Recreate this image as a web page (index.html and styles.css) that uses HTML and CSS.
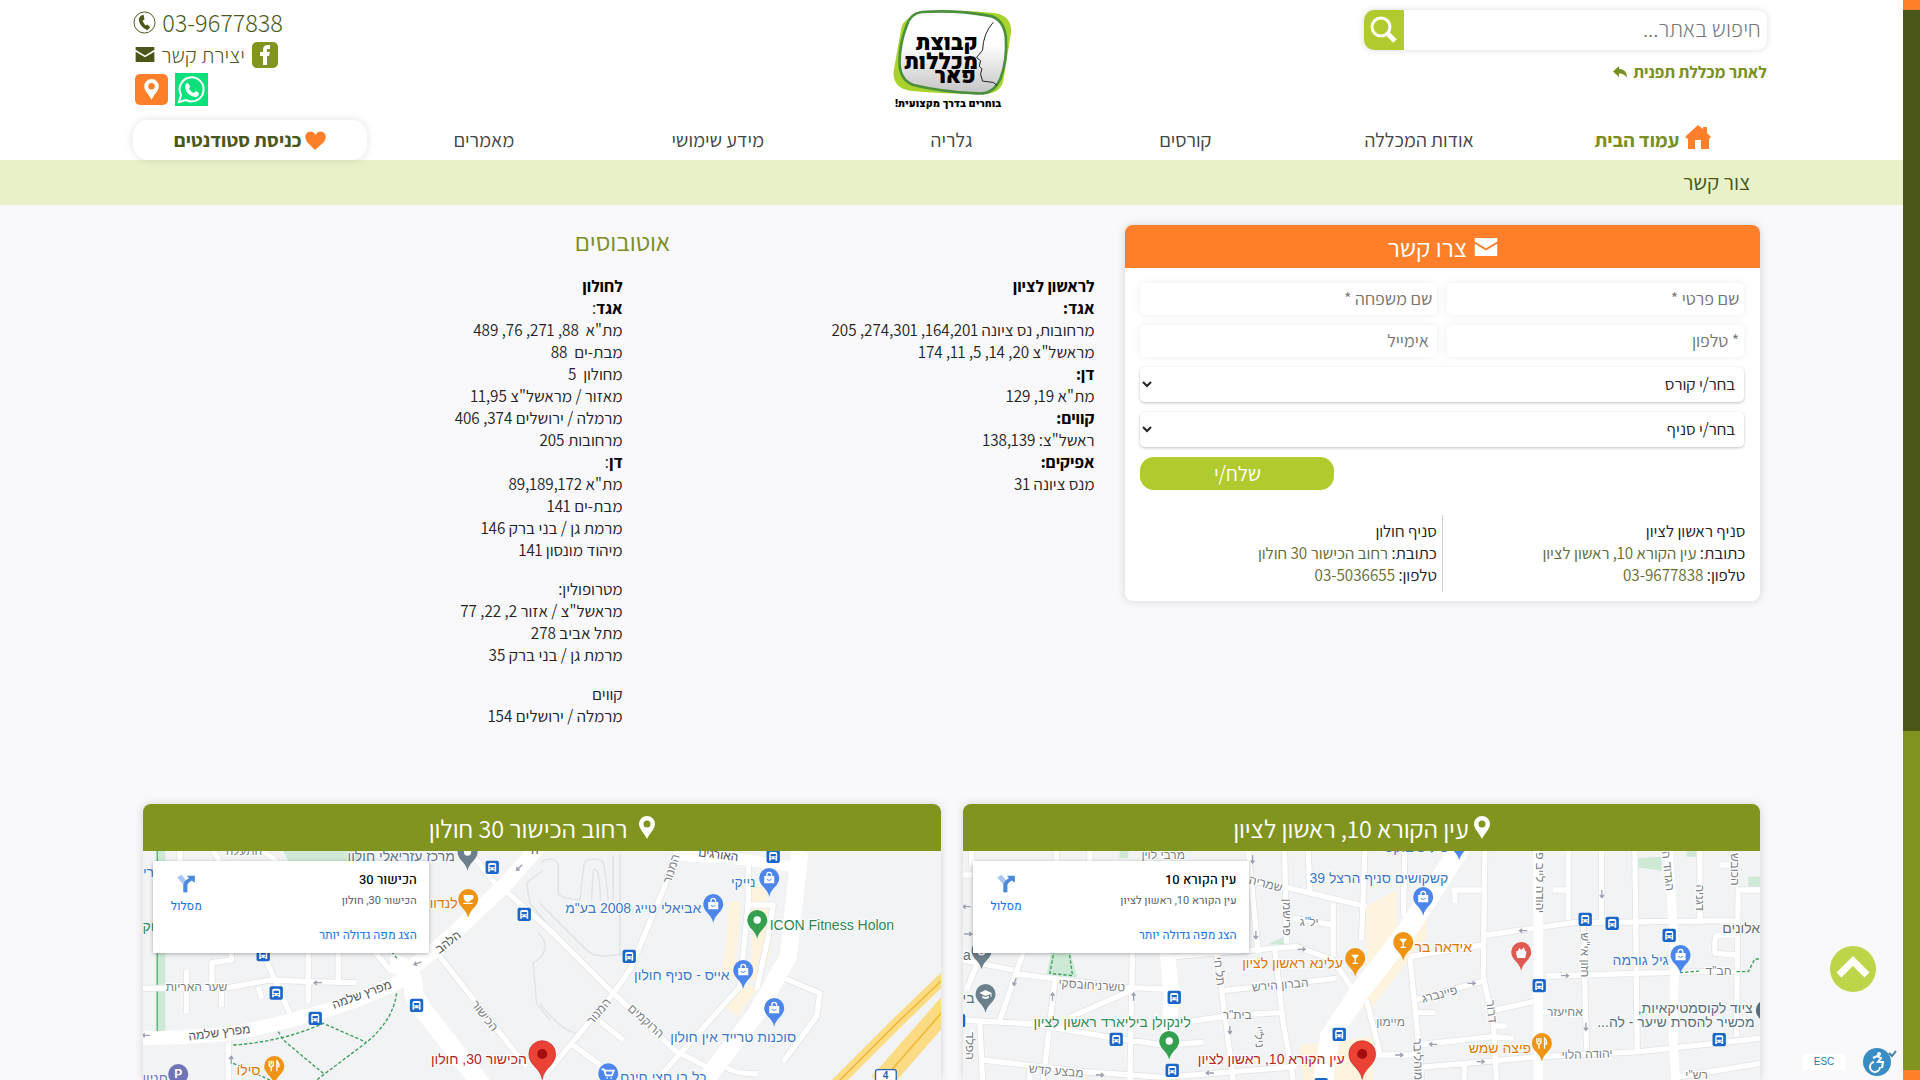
FILE: index.html
```html
<!DOCTYPE html>
<html lang="he" dir="rtl">

<head>
    <meta charset="UTF-8">
    <meta name="viewport" content="width=device-width, initial-scale=1.0">
    <title>צור קשר - קבוצת מכללות פאר</title>
    <link rel="stylesheet" href="styles.css">
</head>

<body>
    <!-- shared icons -->
    <svg class="defs" aria-hidden="true">
        <symbol id="mail" viewBox="0 0 20 16">
            <path d="M0 0H20V3L10 9 0 3Z" />
            <path d="M0 5L10 11 20 5V16H0Z" />
        </symbol>
        <symbol id="place" viewBox="0 0 16 23">
            <path fill-rule="evenodd" d="M8 0A8 8 0 0 1 16 8C16 13 10 18 8 23 6 18 0 13 0 8A8 8 0 0 1 8 0ZM8 4.5A3.5 3.5 0 1 0 8 11.5 3.5 3.5 0 0 0 8 4.500Z" />
        </symbol>
        <g id="bag">
            <path d="M0 56C-5 30-30 24-30 0A30 30 0 1 1 30 0C30 24 5 30 0 56Z" fill="#4c86ec" />
            <path d="M-15-6H15V16H-15Z" fill="#fff" />
            <path d="M-7-5V-10A7 7 0 0 1 7-10V-5" fill="none" stroke="#fff" stroke-width="4" />
            <path d="M-7 4Q0 11 7 4" fill="none" stroke="#4c86ec" stroke-width="3" />
        </g>
        <g id="tip">
            <path d="M0 56C-5 30-30 24-30 0A30 30 0 1 1 30 0C30 24 5 30 0 56Z" />
        </g>
        <g id="fork">
            <path d="M-9-16V-4M-3-16V-4M-15-16V-4Q-15 2-9 2T-3-4M-9 0V16M8 16V-16Q15-10 14 2H8" fill="none" stroke="#fff" stroke-width="4" />
        </g>
        <g id="marker">
            <path d="M0 76C-5 42-40 34-40 0A40 40 0 1 1 40 0C40 34 5 42 0 76Z" fill="#ea4335" stroke="#c5221f" stroke-width="2" />
            <circle r="15" fill="#a50e0e" />
        </g>
        <g id="bus">
            <rect x="-20" y="-20" width="40" height="40" rx="6" fill="#1a66c9" />
            <path d="M-12 13V-8Q-12-13-7-13H7Q12-13 12-8V13H7V9H-7V13Z" fill="#fff" />
            <path d="M-8-7H8V0H-8ZM-8 3H-4V6H-8ZM4 3H8V6H4Z" fill="#1a66c9" />
        </g>
        <g id="cap">
            <path d="M0 56C-5 30-30 24-30 0A30 30 0 1 1 30 0C30 24 5 30 0 56Z" fill="#6b7f8c" />
            <path d="M-18-3L0-12 18-3V8H15V0L0 6ZM-10 5L0 10 10 5V11Q0 18-10 11Z" fill="#fff" />
        </g>
        <g id="arrow">
            <path d="M-12 0H10M3-6L11 0 3 6" fill="none" stroke="#9a9fae" stroke-width="4" />
        </g>
        <symbol id="route" viewBox="0 0 54 58">
            <path d="M0 10L14 2 31 26V56H19V33Z" fill="#a9c7f5" />
            <path d="M19 56V34Q19 22 36 13L30 5H54V27L45 20Q31 27 31 36V56Z" fill="#4a89dc" />
        </symbol>
    </svg>

    <header class="header">
        <div class="container top">
            <div class="search">
                <form class="search-form">
                    <input type="text" id="search" placeholder="חיפוש באתר..." aria-label="חיפוש באתר">
                    <button type="button" aria-label="חפש">
                        <svg viewBox="0 0 28 28"><circle cx="11" cy="11" r="9" fill="none" stroke="#fff" stroke-width="3" /><path d="M17 17L25 25" stroke="#fff" stroke-width="5" /></svg>
                    </button>
                </form>
                <a href="#" class="other-site">לאתר מכללת תפנית
                    <svg viewBox="0 0 14 12"><path d="M6 0V3Q14 3 14 12 11 7 6 7.500V11L0 5.500Z" /></svg>
                </a>
            </div>

            <a href="#" class="logo" aria-label="קבוצת מכללות פאר">
                <svg viewBox="96 20 360 310">
                    <defs>
                        <linearGradient id="shade" x1="0" y1="0" x2="0" y2="1">
                            <stop offset="0.4" stop-color="#fff" />
                            <stop offset="1" stop-color="#c4c4c4" />
                        </linearGradient>
                    </defs>
                    <path d="M175 42Q270 25 405 38 455 46 454 95L430 245Q418 284 365 282 250 282 150 272 98 264 100 215L124 80Q134 52 175 42Z" fill="#a9d32a" />
                    <path d="M185 35Q290 28 385 46 430 52 438 110 443 180 422 235 400 285 350 280 240 275 160 255 120 240 118 190 118 130 140 75 150 40 185 35Z" fill="url(#shade)" stroke="#4a8f3c" stroke-width="8" />
                    <path d="M400 66Q370 100 368 150L350 172 362 182 358 198 366 206 362 222 368 243 400 247 412 256" fill="none" stroke="#222" stroke-width="3" />
                    <text x="354" y="149" class="logo-name">קבוצת</text>
                    <text x="354" y="207" class="logo-name">מכללות</text>
                    <text x="348" y="249" class="logo-name">פאר</text>
                    <text x="424" y="321" class="logo-slogan">בוחרים בדרך מקצועית!</text>
                </svg>
            </a>

            <div class="contacts">
                <a href="#" class="phone">03-9677838
                    <svg viewBox="0 0 24 24"><circle cx="12" cy="12" r="11" fill="none" stroke="#4a5718" stroke-width="1" /><path d="M8 5L11 4 12 9 10 10Q11 13 13 15L15 14 18 17 15 20Q6 16 6 8Z" /></svg>
                </a>
                <div class="contact-row">
                    <a href="#" aria-label="פייסבוק">
                        <svg class="facebook" viewBox="0 0 26 26"><rect width="26" height="26" rx="5" fill="#81941f" /><path d="M11 23V14H8V10H11V8Q11 3 16 3H18V7H16Q15 7 15 8V10H18L17 14H15V23Z" fill="#fff" /></svg>
                    </a>
                    <a href="#">יצירת קשר <svg class="mail"><use href="#mail" /></svg></a>
                </div>
                <div class="contact-row small">
                    <a href="#" aria-label="וואטסאפ">
                        <svg class="whatsapp" viewBox="0 0 33 33"><rect width="33" height="33" fill="#0be07a" /><path d="M4 29L6 22A12 12 0 1 1 11 27Z" fill="none" stroke="#fff" stroke-width="2" /><path d="M12 10L14 11 15 14 14 16Q16 19 19 20L21 18 24 20Q24 24 20 24 11 22 10 14 10 11 12 10Z" fill="#fff" /></svg>
                    </a>
                    <a href="#" class="waze" aria-label="מיקום"><svg><use href="#place" /></svg></a>
                </div>
            </div>
        </div>

        <nav class="container menu">
            <a href="#" class="home">
                <svg viewBox="0 0 26 24"><path d="M13 0L18 4V2H22V8L26 12 24 14V24H16V15H10V24H3V14L0 12Z" /></svg>
                עמוד הבית</a>
            <a href="#">אודות המכללה</a>
            <a href="#">קורסים</a>
            <a href="#">גלריה</a>
            <a href="#">מידע שימושי</a>
            <a href="#">מאמרים</a>
            <a href="#" class="students">
                <svg viewBox="0 0 21 19"><path d="M10 19L2 11Q-2 4 3 1 8-1 10.500 4 13-1 18 1 23 4 19 11Z" /></svg>
                כניסת סטודנטים</a>
        </nav>
    </header>

    <div class="page-title">
        <h1 class="content">צור קשר</h1>
    </div>

    <main class="content">
        <div class="main-row">
            <!-- contact form -->
            <section class="card">
                <h2 class="card-head"><svg><use href="#mail" /></svg>צרו קשר</h2>
                <form class="form">
                    <input type="text" placeholder="שם פרטי *" aria-label="שם פרטי">
                    <input type="text" placeholder="שם משפחה *" aria-label="שם משפחה">
                    <input type="tel" dir="rtl" placeholder="* טלפון" aria-label="טלפון">
                    <input type="email" dir="rtl" placeholder="&nbsp;אימייל" aria-label="אימייל">
                    <select aria-label="קורס">
                        <option>בחר/י קורס</option>
                    </select>
                    <select aria-label="סניף">
                        <option>בחר/י סניף</option>
                    </select>
                    <button type="button">שלח/י</button>
                </form>
                <div class="branches">
                    <p>סניף ראשון לציון<br>כתובת: <a href="#">עין הקורא 10, ראשון לציון</a><br>טלפון: <a href="#">03-9677838</a></p>
                    <p>סניף חולון<br>כתובת: <a href="#">רחוב הכישור 30 חולון</a><br>טלפון: <a href="#">03-5036655</a></p>
                </div>
            </section>

            <!-- bus lines -->
            <section class="buses">
                <h2>אוטובוסים</h2>
                <div class="bus-cols">
                    <div>
                        <p>
                            <b>לראשון לציון</b><br>
                            <b>אגד:</b><br>
                            מרחובות, נס ציונה 164,201, 274,301, 205<br>
                            מראשל"צ 20, 14, 5, 11, 174<br>
                            <b>דן:</b><br>
                            מת"א 19, 129<br>
                            <b>קווים:</b><br>
                            ראשל"צ: 138,139<br>
                            <b>אפיקים:</b><br>
                            מנס ציונה 31
                        </p>
                    </div>
                    <div>
                        <p>
                            <b>לחולון</b><br>
                            <b>אגד</b>:<br>
                            מת"א&nbsp; 88, 271, 76, 489<br>
                            מבת-ים&nbsp; 88<br>
                            מחולון&nbsp; 5<br>
                            מאזור / מראשל"צ 11,95<br>
                            מרמלה / ירושלים 374, 406<br>
                            מרחובות 205<br>
                            <b>דן</b>:<br>
                            מת"א 89,189,172<br>
                            מבת-ים 141<br>
                            מרמת גן / בני ברק 146<br>
                            מיהוד מונסון 141
                        </p>
                        <p>
                            מטרופולין:<br>
                            מראשל"צ / אזור 2, 22, 77<br>
                            מתל אביב 278<br>
                            מרמת גן / בני ברק 35
                        </p>
                        <p>
                            קווים<br>
                            מרמלה / ירושלים 154
                        </p>
                    </div>
                </div>
            </section>
        </div>

        <!-- maps -->
        <div class="maps">
            <section class="map-card">
                <h2><svg><use href="#place" /></svg>עין הקורא 10, ראשון לציון</h2>
                <div class="map">
                    <svg class="map-view" viewBox="39 183 2394 687" preserveAspectRatio="xMidYMin slice">
                        <g class="park">
                            <path d="M305 480H360L382 562 290 555Z" />
                            <path d="M510 183H535V205H508ZM955 462L1005 440 1010 465Z" />
                            <path d="M2060 205L2135 200V242L2060 232ZM2395 260H2433V290H2395ZM2210 183H2240V200H2210Z" />
                        </g>
                        <g class="zone">
                            <path d="M1250 350L1340 300V430L1250 540ZM1430 360V440L1360 530 1260 660 1200 640 1390 420ZM1050 765L1270 740V870H1060Z" />
                        </g>
                        <g class="road-edge">
                            <path id="r1" d="M39 690L250 702 480 742 640 765 760 757M680 700L850 675 990 668M190 550L520 592 640 597M39 510L190 540M39 255H70M250 400L150 690M90 500L50 600M90 700L98 870M315 570L280 870M548 480L540 870M360 682L548 600M100 810L400 845 640 862 1040 830M670 500L970 475 1040 470 1150 510 1210 600M1004 183L1010 460M1075 183L1080 310M895 183L925 490M890 270L1000 290 1250 350M1150 340V500M800 480L850 870M820 602L1160 565M975 480L1000 700 1030 870M1245 183L1235 450M1030 385L1150 405M320 183V220M420 183V220M240 870V830M65 183V230" />
                            <path id="r2" d="M1365 183L1360 380M1605 183L1600 560 1630 700 1640 870M1855 183V390M1955 183V390M2055 183L2062 780M2250 183V390M2365 290L2360 740M1610 435L1870 398 2360 392M1790 558L2250 545H2360M1390 632L1610 570M1630 662L1750 635M1380 500L1600 465M1390 668H1455M1400 765L1630 740 1690 745M1280 795H1400M1410 832L1770 800 2070 785 2433 745M1505 300H1600M1515 300V340M1810 300H1855M1380 500L1410 800 1415 870M1250 630L1290 790M1543 820V870M2190 860L2433 820M2365 300H2433M1770 665H1830M1900 400L1910 780M2365 435H2310Q2295 435 2295 455V490L2360 495M1630 708H1670M2310 225H2350" />
                        </g>
                        <g class="road">
                            <use href="#r1" /><use href="#r2" />
                        </g>
                        <g class="road-main">
                            <path d="M652 480L665 620 655 740" stroke-width="46" />
                            <path d="M1540 160L1370 425 1230 605 1140 740 1120 870" stroke-width="60" />
                            <path d="M1765 183V870" stroke-width="28" />
                            <path d="M2155 183L2175 480 2170 760 2178 870" stroke-width="26" />
                        </g>
                        <path class="path-line" d="M313 480L300 550 368 557 357 480M2190 548L2250 543M2360 545H2395L2415 507H2433" />
                        <g class="streets">
                            <text x="425" y="598" transform="rotate(4 425 598)">טשרניחובסקי</text>
                            <text x="318" y="855" transform="rotate(5 318 855)">מבצע קדש</text>
                            <text x="940" y="292" transform="rotate(14 940 292)">שמריהו</text>
                            <text x="1078" y="407">יל"ג</text>
                            <text x="992" y="597" transform="rotate(-5 992 597)">הברון הירש</text>
                            <text x="862" y="688">בית"ר</text>
                            <text x="640" y="207">מרבי לוין</text>
                            <text x="796" y="545" transform="rotate(83 796 545)">תל חי</text>
                            <text x="1000" y="382" transform="rotate(90 1000 382)">פרישמן</text>
                            <text x="915" y="742" transform="rotate(85 915 742)">ניל"י</text>
                            <text x="48" y="768" transform="rotate(90 48 768)">הפלד</text>
                            <text x="1472" y="625" transform="rotate(-15 1472 625)">פיינברג</text>
                            <text x="1322" y="708">מיימון</text>
                            <text x="1845" y="677">אחיעזר</text>
                            <text x="1912" y="805" transform="rotate(-2 1912 805)">יהודה הלוי</text>
                            <text x="2306" y="556">חב"ד</text>
                            <text x="2240" y="866">רש"י</text>
                            <text x="1758" y="278" transform="rotate(90 1758 278)">יהודה לייב פ</text>
                            <text x="1892" y="495" transform="rotate(90 1892 495)">חזון אי"ש</text>
                            <text x="2142" y="244" transform="rotate(84 2142 244)">הגדוד ה</text>
                            <text x="2238" y="323" transform="rotate(90 2238 323)">דגניה</text>
                            <text x="2343" y="238" transform="rotate(90 2343 238)">הכובש</text>
                            <text x="1613" y="666" transform="rotate(84 1613 666)">דרור</text>
                            <text x="1392" y="808" transform="rotate(88 1392 808)">מוהליבר</text>
                        </g>
                        <use href="#arrow" transform="translate(50 350) rotate(180)" />
                        <use href="#arrow" x="55" y="432" />
                        <use href="#arrow" transform="translate(195 575) rotate(110)" />
                        <use href="#arrow" transform="translate(308 620) rotate(-90)" />
                        <use href="#arrow" transform="translate(551 620) rotate(-90)" />
                        <use href="#arrow" transform="translate(918 435) rotate(90)" />
                        <use href="#arrow" transform="translate(908 208) rotate(90)" />
                        <use href="#arrow" transform="translate(840 720) rotate(90)" />
                        <use href="#arrow" x="1055" y="478" />
                        <use href="#arrow" x="450" y="855" />
                        <use href="#arrow" transform="translate(780 849) rotate(180)" />
                        <use href="#arrow" transform="translate(1720 422) rotate(180)" />
                        <use href="#arrow" transform="translate(1956 312) rotate(90)" />
                        <use href="#arrow" transform="translate(1908 710) rotate(90)" />
                        <use href="#arrow" transform="translate(1450 763) rotate(180)" />
                        <use href="#arrow" x="1845" y="557" />
                        <use href="#arrow" x="1565" y="580" />
                        <use href="#arrow" x="1348" y="795" />
                        <use href="#arrow" x="1592" y="815" />
                        <g class="labels">
                            <text x="1287" y="279" fill="#3b77c9">קשקושים סניף הרצל 39</text>
                            <text x="1028" y="535" fill="#d97706">עלינא ראשון לציון</text>
                            <text x="487" y="710" fill="#2e8b57">לינקולן ביליארד ראשון לציון</text>
                            <text x="964" y="822" fill="#b3261e">עין הקורא 10, ראשון לציון</text>
                            <text x="1480" y="486" fill="#d97706">אידאה בר</text>
                            <text x="1650" y="789" fill="#d97706">פיצה שמש</text>
                            <text x="2072" y="524" fill="#3b77c9">גיל גורמה</text>
                            <text x="2374" y="429" fill="#5f6b75">אלונים</text>
                            <text x="2236" y="669" fill="#546e7a">ציוד לקוסמטיקאיות,</text>
                            <text x="2178" y="711" fill="#546e7a">מכשיר להסרת שיער - לה...</text>
                            <text x="1400" y="187" fill="#3b77c9">פיליפ בוקס</text>
                            <text x="51" y="510" fill="#546e7a">a</text>
                            <text x="56" y="640" fill="#546e7a">בי</text>
                        </g>
                        <use href="#cap" x="95" y="482" />
                        <use href="#cap" x="107" y="612" />
                        <use href="#bag" x="1420" y="321" />
                        <use href="#bag" x="1528" y="155" />
                        <use href="#bag" x="2192" y="495" />
                        <use href="#tip" x="658" y="753" fill="#34a04f" /><circle cx="658" cy="753" r="11" fill="#fff" />
                        <use href="#tip" x="1216" y="504" fill="#ef9412" /><path d="M1204 494H1228L1218 506V518H1224V522H1208V518H1214V506Z" fill="#fff" />
                        <use href="#tip" x="1360" y="456" fill="#ef9412" /><path d="M1348 446H1372L1362 458V470H1368V474H1352V470H1358V458Z" fill="#fff" />
                        <use href="#tip" x="1776" y="759" fill="#ef9412" /><use href="#fork" x="1776" y="760" />
                        <use href="#tip" x="1714" y="486" fill="#e05a54" /><path d="M1698 484H1730L1726 504H1702ZM1704 484L1708 474 1714 480 1722 472 1726 484Z" fill="#fff" />
                        <use href="#tip" x="2448" y="660" fill="#546e7a" />
                        <use href="#tip" x="2462" y="470" fill="#546e7a" />
                        <use href="#bus" x="673" y="622" /><use href="#bus" x="499" y="748" /><use href="#bus" x="667" y="841" />
                        <use href="#bus" x="1168" y="733" /><use href="#bus" x="1114" y="884" /><use href="#bus" x="26" y="692" />
                        <use href="#bus" x="1768" y="587" /><use href="#bus" x="1906" y="388" /><use href="#bus" x="1987" y="400" />
                        <use href="#bus" x="2158" y="436" /><use href="#bus" x="2308" y="749" />
                        <use href="#marker" x="1237" y="792" />
                    </svg>
                    <div class="map-info">
                        <div>
                            <strong>עין הקורא 10</strong>
                            <span>עין הקורא 10, ראשון לציון</span>
                            <a href="#">הצג מפה גדולה יותר</a>
                        </div>
                        <a href="#" class="route"><svg><use href="#route" /></svg>מסלול</a>
                    </div>
                </div>
            </section>

            <section class="map-card">
                <h2><svg class="far"><use href="#place" /></svg>רחוב הכישור 30 חולון</h2>
                <div class="map">
                    <svg class="map-view" viewBox="39 183 2394 687" preserveAspectRatio="xMidYMin slice">
                        <path class="park" d="M78 183H106V725H78ZM460 183H680L700 220H480Z" />
                        <path d="M82 183V725" stroke="#3c9d5a" stroke-width="3" />
                        <g class="zone">
                            <path d="M1850 290H1910V340L1935 345 1920 500 1880 580 1860 560 1870 400ZM1800 335H1832L1815 560 1775 575ZM1775 640L1860 585 1880 600 1820 680Z" />
                        </g>
                        <g class="outline">
                            <path d="M1235 215Q1275 195 1285 225V310Q1290 325 1350 330L1362 225Q1365 205 1400 208 1425 210 1425 240L1435 330M1470 195V500M1450 195V330M1385 330L1390 240Q1410 225 1412 330M1230 340L1370 480Q1400 510 1480 490M1230 640Q1290 720 1340 730M1240 240L1190 280 1200 340 1260 410M1225 430Q1260 460 1235 500L1210 520 1220 640 1260 690" />
                        </g>
                        <g class="road-edge">
                            <path id="l1" d="M39 595L300 592 420 570 540 575 680 578M170 540V670M275 600V650M305 480V510L246 518V595M395 480L480 670M535 480V640M625 480V578M385 590L395 625M930 500L1190 830M1130 305L1260 420 1450 610 1640 785 1750 840M1640 183L1600 300 1500 540 1450 610 1250 850M1855 220V340L1830 590 1580 870M1855 345H1930L1915 440 1880 600M1930 550L2070 610 2060 680 1960 815M1405 690L1480 750M1330 765L1430 840M1790 830Q1800 850 1885 852M1020 183L1095 280M295 760V870M730 480L780 540M150 183V215M250 183L270 215M400 183L440 215M260 600V590" />
                        </g>
                        <g class="road"><use href="#l1" /></g>
                        <g class="road-main">
                            <path d="M1235 160L1120 290 940 460 850 530 830 560" stroke-width="46" />
                            <path d="M840 560Q700 630 560 670 400 715 300 730 200 742 39 745" stroke-width="42" />
                            <path d="M780 520Q860 530 850 610L880 660 1060 890" stroke-width="56" />
                            <path d="M1630 195L1850 210 2020 235" stroke-width="32" />
                            <path d="M2010 183L1975 500 1880 670 1750 840 1730 870" stroke-width="52" />
                        </g>
                        <path d="M2460 545L2300 700 2110 890" class="highway" stroke-width="34" />
                        <path d="M2460 640L2250 880" class="highway" stroke-width="64" />
                        <path d="M2460 548L2290 710 2110 890M2460 640L2250 880" fill="none" stroke="#f0b93a" stroke-width="5" />
                        <path class="path-line" d="M310 765Q460 755 580 700L710 757M800 610Q790 690 710 757L560 870M445 725L460 750 580 850M785 485L805 510M310 820L420 870" />
                        <g class="streets">
                            <text x="342" y="195">התעלה</text>
                            <text x="200" y="604">שער האריות</text>
                            <text x="700" y="625" class="dark" transform="rotate(-20 700 625)">מפרץ שלמה</text>
                            <text x="270" y="740" class="dark" transform="rotate(-7 270 740)">מפרץ שלמה</text>
                            <text x="962" y="466" class="dark" transform="rotate(-37 962 466)">הלהב</text>
                            <text x="1055" y="685" transform="rotate(52 1055 685)">הכישור</text>
                            <text x="1636" y="240" transform="rotate(-72 1636 240)">המנור</text>
                            <text x="1416" y="672" transform="rotate(-50 1416 672)">המנור</text>
                            <text x="1540" y="702" transform="rotate(42 1540 702)">הרוקמים</text>
                            <text x="1764" y="206" class="dark" transform="rotate(7 1764 206)">האורגים</text>
                            <text x="1215" y="192" class="dark">ה</text>
                        </g>
                        <use href="#arrow" transform="translate(48 736) rotate(180)" />
                        <use href="#arrow" transform="translate(564 578) rotate(180)" />
                        <use href="#arrow" transform="translate(863 520) rotate(160)" />
                        <use href="#arrow" transform="translate(1168 233) rotate(135)" />
                        <use href="#arrow" transform="translate(304 810) rotate(-90)" />
                        <g class="labels">
                            <text x="814" y="213" fill="#5f7180">מרכז עזריאלי חולון</text>
                            <text x="930" y="354" fill="#d97706">לנדוור</text>
                            <text x="56" y="262" fill="#3b77c9">רי</text>
                            <text x="56" y="424" fill="#2e8b57">וק</text>
                            <text x="356" y="856" fill="#d97706">סילו</text>
                            <text x="76" y="880" fill="#6f74b8">חניון</text>
                            <text x="1047" y="822" fill="#b3261e">הכישור 30, חולון</text>
                            <text x="1840" y="292" fill="#3b77c9">נייקי</text>
                            <text x="1510" y="370" fill="#3b77c9">אביאלי טייג 2008 בע"מ</text>
                            <text x="2106" y="419" fill="#2a8453">ICON Fitness Holon</text>
                            <text x="1656" y="570" fill="#3b77c9">אייס - סניף חולון</text>
                            <text x="1810" y="755" fill="#3b77c9">סוכנות טרייד אין חולון</text>
                            <text x="1600" y="876" fill="#3b77c9">כל בו חצי חינם</text>
                        </g>
                        <use href="#tip" x="1013" y="186" fill="#6b7f8c" /><circle cx="1013" cy="186" r="11" fill="#fff" />
                        <use href="#tip" x="1015" y="327" fill="#ef9412" /><path d="M1001 315H1025Q1033 316 1031 324 1029 330 1023 330 1020 336 1012 336 1001 334 1001 315ZM1000 338H1028V342H1000Z" fill="#fff" />
                        <use href="#tip" x="145" y="852" fill="#6f74b8" /><text x="145" y="865" class="parking">P</text>
                        <use href="#tip" x="433" y="828" fill="#ef9412" /><use href="#fork" x="433" y="828" />
                        <use href="#bag" x="1918" y="264" /><use href="#bag" x="1750" y="342" />
                        <use href="#bag" x="1840" y="540" /><use href="#bag" x="1933" y="654" />
                        <use href="#tip" x="1882" y="390" fill="#34a04f" /><circle cx="1882" cy="390" r="11" fill="#fff" />
                        <use href="#tip" x="1435" y="850" fill="#4c86ec" /><path d="M1415 838H1422L1428 856H1446L1452 842H1424M1430 864H1434M1442 864H1446" fill="none" stroke="#fff" stroke-width="5" />
                        <use href="#bus" x="1087" y="232" /><use href="#bus" x="1183" y="373" /><use href="#bus" x="400" y="494" />
                        <use href="#bus" x="439" y="609" /><use href="#bus" x="556" y="685" /><use href="#bus" x="860" y="646" />
                        <use href="#bus" x="1930" y="199" /><use href="#bus" x="1498" y="499" />
                        <rect x="2237" y="839" width="62" height="40" rx="6" fill="#fff" stroke="#2a62b8" stroke-width="4" />
                        <text x="2267" y="868" class="road-number">4</text>
                        <use href="#marker" x="1237" y="792" />
                    </svg>
                    <div class="map-info">
                        <div>
                            <strong>הכישור 30</strong>
                            <span>הכישור 30, חולון</span>
                            <a href="#">הצג מפה גדולה יותר</a>
                        </div>
                        <a href="#" class="route"><svg><use href="#route" /></svg>מסלול</a>
                    </div>
                </div>
            </section>
        </div>
    </main>

    <!-- floating controls -->
    <button type="button" class="to-top" aria-label="חזרה למעלה">
        <svg viewBox="0 0 46 46"><path d="M9 29L23 15 37 29" fill="none" stroke="#fff" stroke-width="7" /></svg>
    </button>
    <div class="access">
        <button type="button" class="access-btn" aria-label="נגישות">
            <svg viewBox="0 0 34 28">
                <circle cx="14" cy="14" r="14" fill="#3a8dc2" />
                <circle cx="16" cy="6" r="2" fill="#fff" />
                <path d="M10 10L14 8 18 10 15 14H20L19 20M11 14A5 5 0 1 0 17 19" fill="none" stroke="#fff" stroke-width="2" />
                <path d="M26 5L29 8 33 3" fill="none" stroke="#3a7fae" stroke-width="2" />
            </svg>
        </button>
        <span class="esc">ESC</span>
    </div>
    <div class="scrollbar"><div class="thumb"></div></div>
</body>

</html>
```
FILE: styles.css
```css
* {
    box-sizing: border-box;
}

body {
    margin: 0;
    padding-right: 17px;
    background-color: #f9f9fb;
    font-family: "Assistant", "Open Sans", sans-serif;
    font-size: 17px;
    line-height: 22px;
    color: #222;
}

a {
    color: inherit;
    text-decoration: none;
}

h1, h2, p {
    margin: 0;
    font-weight: 400;
}

input, select, button {
    font-family: inherit;
    border: none;
    outline: none;
}

button {
    cursor: pointer;
}

svg {
    display: block;
    fill: currentColor;
}

.defs {
    position: absolute;
    width: 0;
    height: 0;
}

.container {
    width: 86%;
    margin: 0 auto;
}

.content {
    width: 85%;
    margin: 0 auto;
}

/* header */
.header {
    background-color: #fff;
}

.top {
    display: grid;
    grid-template-columns: 1fr auto 1fr;
    height: 120px;
}

.search {
    padding: 10px 3px 0 0;
}

.search-form {
    display: flex;
    width: 403px;
    height: 40px;
    border-radius: 10px;
    overflow: hidden;
    box-shadow: 0 0 6px rgba(0, 0, 0, 0.15);
}

.search-form input {
    flex: 1;
    min-width: 0;
    padding: 0 6px 2px;
    font-size: 23px;
    font-weight: 300;
}

.search-form button {
    width: 40px;
    padding: 6px;
    background-color: #b1ca2d;
}

.other-site {
    display: inline-flex;
    align-items: center;
    gap: 6px;
    margin-top: 11px;
    font-weight: 700;
    color: #7a8f22;
}

.other-site svg {
    width: 14px;
    height: 12px;
}

.logo {
    padding-top: 7px;
}

.logo svg {
    width: 120px;
    height: 103px;
}

.logo-name, .logo-slogan {
    font-family: "Heebo", "Open Sans", sans-serif;
    font-weight: 900;
    fill: #000;
}

.logo-name {
    font-size: 66px;
}

.logo-slogan {
    font-size: 32px;
}

.contacts {
    display: flex;
    flex-direction: column;
    align-items: flex-end;
    padding-top: 6px;
    color: #4a5718;
}

.phone, .contact-row, .contact-row a {
    display: flex;
    align-items: center;
    gap: 6px;
}

.phone {
    height: 32px;
    font-size: 26px;
    font-weight: 300;
}

.phone svg {
    width: 23px;
    height: 23px;
}

.contact-row {
    height: 33px;
    gap: 7px;
    padding-left: 2px;
    font-size: 22px;
    font-weight: 300;
}

.facebook {
    width: 26px;
    height: 26px;
}

.mail {
    width: 20px;
    height: 15px;
}

.small {
    height: 36px;
}

.whatsapp {
    width: 33px;
    height: 33px;
}

.contact-row .waze {
    justify-content: center;
    width: 33px;
    height: 31px;
    border-radius: 5px;
    background-color: #ff7f2a;
    color: #fff;
}

.waze svg {
    width: 15px;
    height: 21px;
}

/* menu */
.menu {
    display: flex;
    height: 40px;
}

.menu a {
    flex: 1;
    display: flex;
    align-items: center;
    justify-content: center;
    gap: 6px;
    font-size: 20px;
    color: #444;
}

.menu .home {
    font-weight: 700;
    color: #7a8f22;
}

.menu .home svg {
    width: 26px;
    height: 24px;
    margin-bottom: 6px;
    color: #ff7f2a;
}

.menu .students {
    gap: 4px;
    border-radius: 15px;
    background-color: #fff;
    box-shadow: 0 0 8px rgba(0, 0, 0, 0.12);
    font-weight: 700;
    color: #4a5718;
}

.students svg {
    width: 21px;
    height: 19px;
    color: #ff7f2a;
}

.page-title {
    background-color: #e9f1c9;
}

.page-title h1 {
    padding: 0 10px;
    font-size: 22px;
    line-height: 45px;
    color: #4a5718;
}

/* contact form */
.main-row {
    display: grid;
    grid-template-columns: 635fr 952fr;
    gap: 31px;
    align-items: start;
    padding-top: 20px;
}

.card {
    border-radius: 8px;
    overflow: hidden;
    background-color: #fff;
    box-shadow: 0 0 10px rgba(0, 0, 0, 0.15);
}

.card-head {
    display: flex;
    align-items: center;
    justify-content: center;
    gap: 7px;
    height: 43px;
    background-color: #ff7f2a;
    font-size: 26px;
    color: #fff;
}

.card-head svg {
    width: 24px;
    height: 18px;
}

.form {
    display: grid;
    grid-template-columns: 1fr 1fr;
    gap: 10px;
    padding: 15px 16px 0 15px;
}

.form input {
    min-width: 0;
    height: 32px;
    padding: 0 5px 2px;
    border-radius: 5px;
    font-size: 18px;
    box-shadow: 0 0 8px rgba(0, 0, 0, 0.07);
}

.form select {
    grid-column: 1 / 3;
    height: 35px;
    padding: 0 5px 2px;
    border-radius: 5px;
    background-color: #fff;
    font-size: 17px;
    color: #222;
    box-shadow: 0 1px 3px rgba(0, 0, 0, 0.25);
}

.form button {
    grid-column: 2;
    justify-self: end;
    width: 194px;
    height: 33px;
    padding: 0;
    border-radius: 14px;
    background-color: #b1ca2d;
    font-size: 21px;
    color: #fff;
}

.branches {
    display: grid;
    grid-template-columns: 1fr 1fr;
    margin: 25px 15px 9px;
}

.branches p {
    padding: 5px 0 6px;
}

.branches p + p {
    padding-right: 5px;
    border-right: 1px solid #ccc;
}

.branches a {
    color: #5f6b33;
}

/* bus lines */
.buses {
    padding-left: 8px;
}

.buses h2 {
    margin-bottom: 18px;
    font-size: 26px;
    line-height: 32px;
    text-align: center;
    color: #7a8f22;
}

.bus-cols {
    display: grid;
    grid-template-columns: 1fr 1fr;
}

.bus-cols p {
    margin-bottom: 17px;
}

.bus-cols b {
    color: #000;
}

/* maps */
.maps {
    display: grid;
    grid-template-columns: 1fr 1fr;
    gap: 22px;
    padding-top: 60px;
}

.map-card {
    border-radius: 8px 8px 0 0;
    overflow: hidden;
    box-shadow: 0 0 10px rgba(0, 0, 0, 0.15);
}

.map-card h2 {
    display: flex;
    align-items: center;
    justify-content: center;
    gap: 5px;
    height: 47px;
    background-color: #81941f;
    font-size: 26px;
    color: #fff;
}

.map-card h2 svg {
    width: 16px;
    height: 23px;
}

.map-card h2 .far {
    margin-left: 6px;
}

.map {
    position: relative;
    height: 229px;
    overflow: hidden;
    background-color: #f1f3f4;
}

.map-view {
    width: 100%;
    height: 229px;
}

.park {
    fill: #ceead6;
}

.zone {
    fill: #fef3dc;
}

.road-edge, .road, .road-main, .outline, .highway {
    fill: none;
    stroke-linejoin: round;
}

.road-edge {
    stroke: #dfe2e6;
    stroke-width: 20;
}

.road, .road-main {
    stroke: #fff;
    stroke-width: 16;
}

.outline {
    stroke: #dfe2e6;
    stroke-width: 4;
}

.highway {
    stroke: #fbdc85;
}

.path-line {
    fill: none;
    stroke: #3c9d5a;
    stroke-width: 4;
    stroke-dasharray: 10 6;
}

.streets text, .labels text, .parking, .road-number {
    font-family: "Liberation Sans", Arial, sans-serif;
    text-anchor: middle;
}

.streets text {
    font-size: 36px;
    fill: #7b7f85;
    stroke: #fff;
    stroke-width: 6;
    paint-order: stroke;
}

.streets .dark {
    fill: #50545a;
}

.labels text {
    font-size: 42px;
    stroke: #fff;
    stroke-width: 5;
    paint-order: stroke;
}

.parking {
    font-size: 36px;
    font-weight: 700;
    fill: #fff;
}

.road-number {
    font-size: 30px;
    font-weight: 700;
    fill: #2a62b8;
}

.map-info {
    position: absolute;
    top: 10px;
    left: 10px;
    display: flex;
    justify-content: space-between;
    width: 276px;
    height: 92px;
    padding: 11px 12px 0 18px;
    background-color: #fff;
    box-shadow: 0 1px 4px rgba(0, 0, 0, 0.3);
    font-family: "Heebo", "Liberation Sans", sans-serif;
    font-size: 12px;
    line-height: 16px;
}

.map-info strong, .map-info span {
    display: block;
}

.map-info strong {
    font-size: 13px;
    font-weight: 500;
    color: #000;
}

.map-info span {
    margin: 5px 0 18px;
    font-size: 11px;
    color: #5b5b5b;
}

.map-info a {
    color: #1a73e8;
}

.route svg {
    width: 18px;
    height: 19px;
    margin: 2px auto 5px;
}

/* floating controls */
.to-top {
    position: fixed;
    right: 44px;
    bottom: 88px;
    width: 46px;
    height: 46px;
    padding: 0;
    border-radius: 50%;
    background-color: #bdd549;
}

.access {
    position: fixed;
    right: 23px;
    bottom: 4px;
    display: flex;
    align-items: center;
    gap: 18px;
}

.access-btn {
    padding: 0;
    background: none;
}

.access-btn svg {
    width: 34px;
    height: 28px;
}

.esc {
    width: 42px;
    background-color: #fff;
    font-family: "Liberation Sans", Arial, sans-serif;
    font-size: 10px;
    line-height: 16px;
    text-align: center;
    color: #35789e;
}

/* scrollbar */
.scrollbar {
    position: fixed;
    top: 0;
    right: 0;
    width: 17px;
    height: 100%;
    padding: 10px 0;
    background-color: #ff7f2a;
}

.thumb {
    height: 100%;
    background: linear-gradient(#4a5718 68%, #81941f 68%);
}
```
